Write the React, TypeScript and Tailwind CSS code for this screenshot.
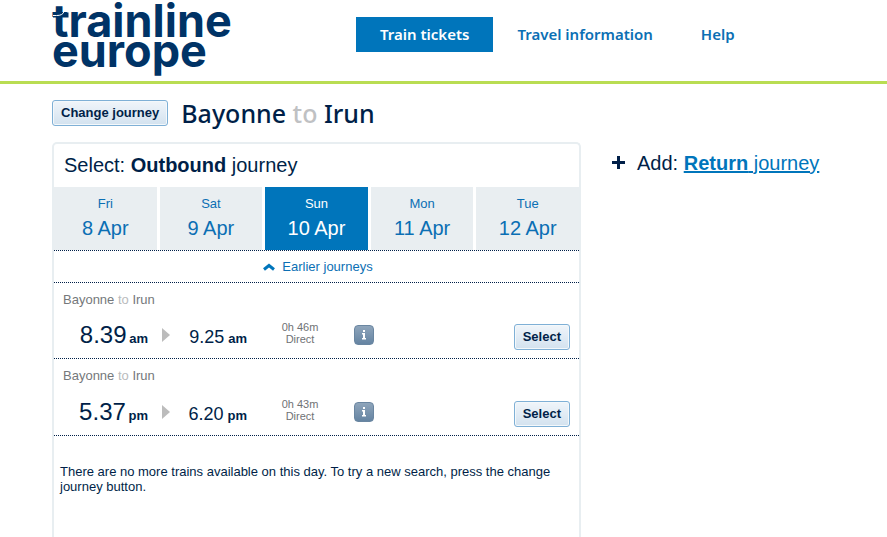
import { useState } from "react"
import clsx from "clsx"

type Journey = {
    departs: string
    arrives: string
    period: string
    duration: string
}

const navItems = ["Train tickets", "Travel information", "Help"]

const days = [
    { day: "Fri", date: "8 Apr" },
    { day: "Sat", date: "9 Apr" },
    { day: "Sun", date: "10 Apr" },
    { day: "Mon", date: "11 Apr" },
    { day: "Tue", date: "12 Apr" },
]

const journeys: Journey[] = [
    { departs: "8.39", arrives: "9.25", period: "am", duration: "0h 46m" },
    { departs: "5.37", arrives: "6.20", period: "pm", duration: "0h 43m" },
]

const buttonStyle =
    "h-[26px] rounded-[3px] border border-[#7fb0d6] bg-linear-to-b from-[#f0f5fa] to-[#d3e2ef] px-2 text-[13px] font-bold text-[#001f48] shadow-[inset_0_0_0_1px_#f4f8fb]"

function Logo() {
    return (
        <a href="#" aria-label="trainline europe" className="relative block w-[180px] pt-[6px] font-['Inter',sans-serif] text-[45px] leading-[30px] font-bold text-[#003366]">
            <span className="block">trainline</span>
            <span className="block">europe</span>
            {/* Rails crossing the t */}
            <svg className="absolute top-[4px] left-0" width="18" height="20" viewBox="0 0 18 20" fill="none" aria-hidden="true">
                <path d="M1 8.500h15.500v5H1z" fill="#003366" />
                <path d="M1 11.500h3.500c4 0 6.500-1 7.500-4" stroke="#fff" strokeWidth="1" />
            </svg>
        </a>
    )
}

function JourneyRow({ journey }: { journey: Journey }) {
    return (
        <li className="flex min-h-[76px] flex-col justify-between border-b border-dotted border-[#001f48] pt-[9px] pb-2 last:min-h-[77px]">
            <p className="px-[9px] text-[13px] leading-4 text-[#75787b]">
                Bayonne <span className="text-[#b9bbbd]">to</span> Irun
            </p>
            <div className="flex h-[26px] items-center pr-[9px] text-[#001f48]">
                <div className="w-[94px] text-right text-2xl leading-6">
                    {journey.departs} <b className="-ml-1 text-[13px]">{journey.period}</b>
                </div>
                <svg className="mb-1 ml-[14px]" width="8" height="16" viewBox="0 0 8 16" aria-hidden="true">
                    <path d="M0 1v14l8-7z" fill="#bcbcbc" />
                </svg>
                <div className="mt-[2px] w-[77px] text-right text-lg leading-6">
                    {journey.arrives} <b className="-ml-px text-[13px]">{journey.period}</b>
                </div>
                <div className="mb-2 ml-[25px] w-[56px] text-center text-[11px] leading-3 text-[#6f7275]">
                    {journey.duration}
                    <br />
                    Direct
                </div>
                <button
                    aria-label="Journey details"
                    className="mb-1 ml-[26px] flex size-5 items-center justify-center rounded-[4px] border border-[#6a86a1] bg-linear-to-b from-[#8fa5bb] to-[#6584a2]"
                >
                    <svg width="6" height="10" viewBox="0 0 6 10" fill="#fff" aria-hidden="true">
                        <path d="M2 0h2v2H2zM1 3h3v5h1v1.500H1V8h1V4.500H1z" />
                    </svg>
                </button>
                <button className={clsx(buttonStyle, "ml-auto")}>Select</button>
            </div>
        </li>
    )
}

export default function App() {
    const [selected, setSelected] = useState("10 Apr")

    return (
        <div className="flex min-h-screen flex-col bg-white font-['Liberation_Sans',Arial,sans-serif] text-[#001f48]">
            {/* Header */}
            <header className="flex h-[84px] items-start border-b-[3px] border-[#b9dd52] pl-[52px]">
                <Logo />
                <nav className="mt-[17px] ml-[124px] flex font-['Noto_Sans',sans-serif] text-[15px] font-semibold">
                    {navItems.map((item, i) => (
                        <a
                            key={item}
                            href="#"
                            className={clsx("px-6 leading-[35px] whitespace-nowrap", i === 0 ? "bg-[#0075bb] text-white" : "text-[#0b6fb4]")}
                        >
                            {item}
                        </a>
                    ))}
                </nav>
            </header>

            {/* Route title */}
            <div className="flex h-[58px] items-center gap-[13px] pl-[52px]">
                <button className={buttonStyle}>Change journey</button>
                <h1 className="font-['Noto_Sans',sans-serif] text-[25px] leading-8 font-medium">
                    Bayonne <span className="text-[#bfc1c3]">to</span> Irun
                </h1>
            </div>

            <main className="flex flex-1 items-stretch gap-[31px] pl-[52px]">
                <section className="max-w-[529px] flex-1 rounded-t-[5px] border-2 border-b-0 border-[#e8eef1]">
                    <h2 className="px-[10px] pt-[9px] pb-[10px] text-xl leading-6">
                        Select: <b>Outbound</b> journey
                    </h2>

                    {/* Day tabs */}
                    <div className="grid grid-cols-5 gap-[3px]">
                        {days.map(({ day, date }) => (
                            <button
                                key={date}
                                onClick={() => setSelected(date)}
                                className={clsx(
                                    "flex h-[63px] flex-col items-center pt-[9px]",
                                    selected === date ? "bg-[#0075bb] text-white" : "bg-[#e9eef1] text-[#0b6fb4]"
                                )}
                            >
                                <span className="text-[13px] leading-4">{day}</span>
                                <span className="mt-1 text-xl leading-6">{date}</span>
                            </button>
                        ))}
                    </div>

                    <div className="flex h-[33px] items-center justify-center border-y border-dotted border-[#001f48]">
                        <a href="#" className="flex items-center gap-[7px] pl-[3px] text-[13px] text-[#0b6fb4]">
                            <svg width="12" height="8" viewBox="0 0 12 8" fill="none" aria-hidden="true">
                                <path d="M1 6.500l5-4 5 4" stroke="#0075bb" strokeWidth="3" />
                            </svg>
                            Earlier journeys
                        </a>
                    </div>

                    <ul>
                        {journeys.map((journey) => (
                            <JourneyRow key={journey.departs} journey={journey} />
                        ))}
                    </ul>

                    <p className="px-[6px] pt-7 text-[13px] leading-[15px]">
                        There are no more trains available on this day. To try a new search, press the change journey button.
                    </p>
                </section>

                <aside className="mt-[9px] flex h-6 flex-none items-center gap-3 text-xl leading-6">
                    <svg className="mb-[2px]" width="13" height="13" viewBox="0 0 13 13" aria-hidden="true">
                        <path d="M0 6.500h13M6.500 0v13" stroke="#001f48" strokeWidth="3" />
                    </svg>
                    <span>
                        Add:{" "}
                        <a href="#" className="text-[#0075bb] underline">
                            <b>Return</b> journey
                        </a>
                    </span>
                </aside>
            </main>
        </div>
    )
}
